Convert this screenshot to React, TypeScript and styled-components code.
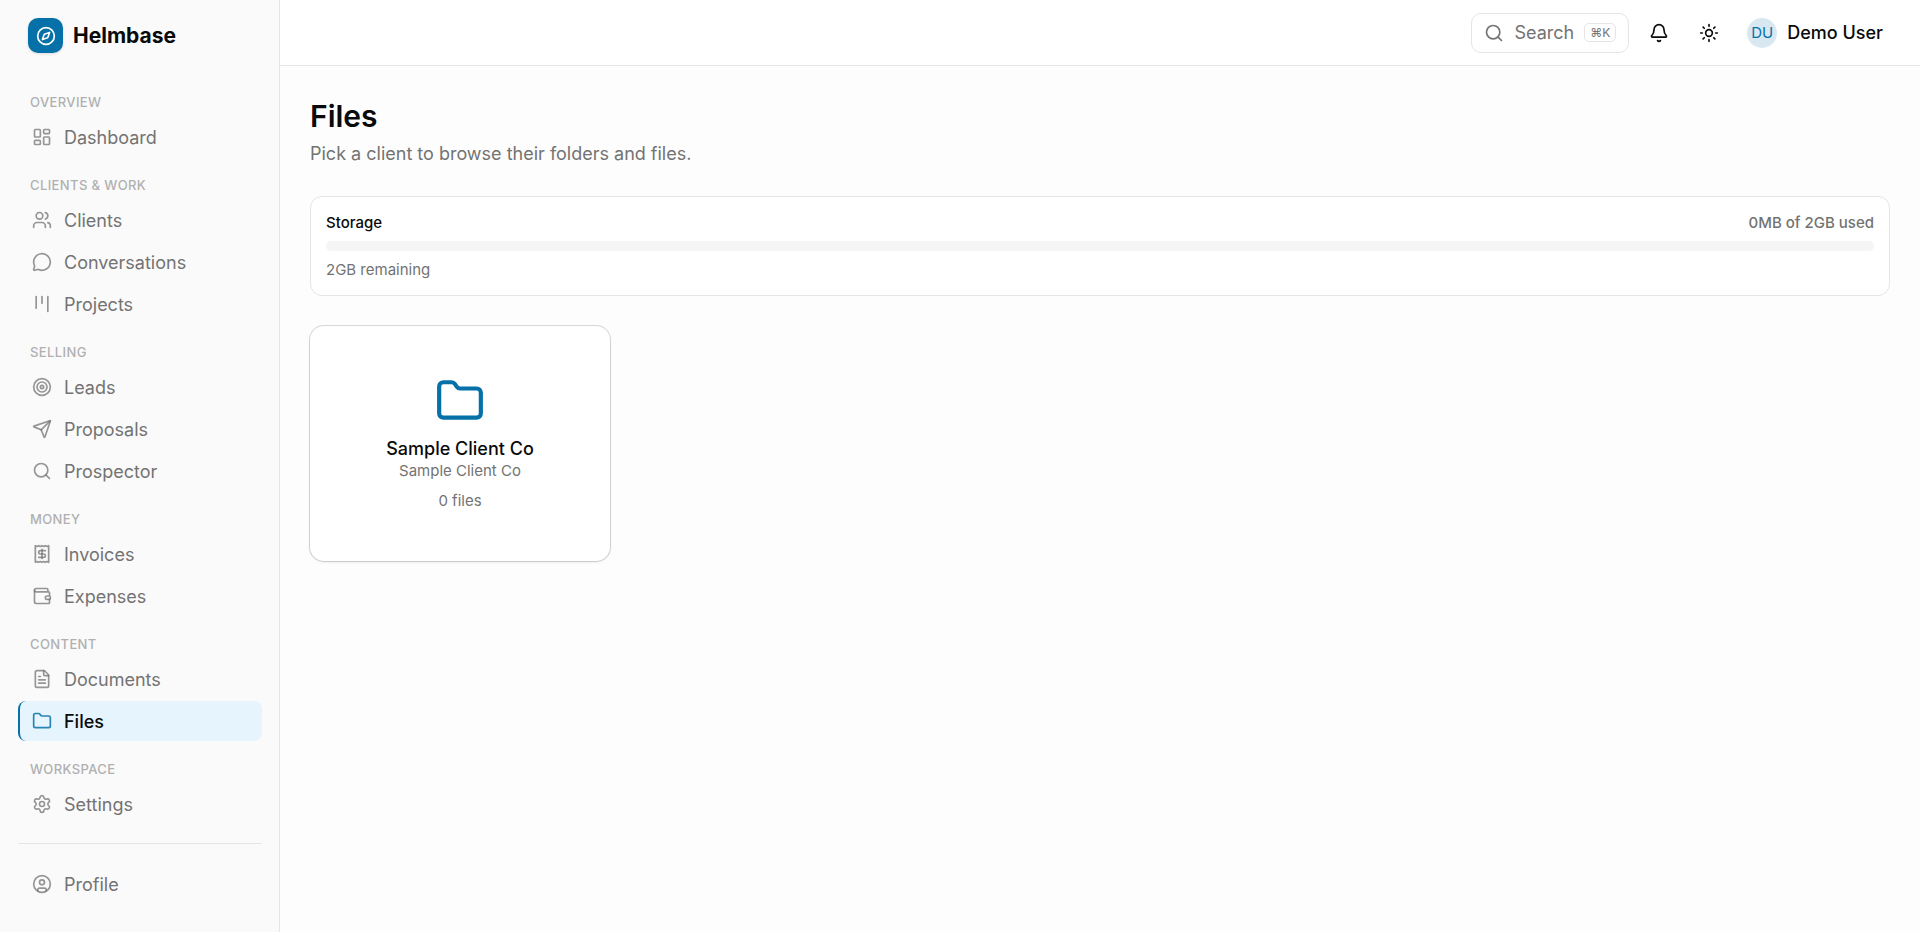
import React from "react";
import styled, { createGlobalStyle } from "styled-components";
import {
  Bell,
  CircleUser,
  Compass,
  FileText,
  Folder,
  Kanban,
  LayoutDashboard,
  MessageCircle,
  Receipt,
  Search,
  Send,
  Settings,
  Sun,
  Target,
  Users,
  Wallet,
  type LucideIcon,
} from "lucide-react";

const color = {
  ink: "#0a0a0a",
  muted: "#737373",
  faint: "#b0b0b0",
  line: "#e5e5e5",
  brand: "#0671a8",
  sidebar: "#fafafa",
  page: "#fdfdfd",
};

const GlobalStyle = createGlobalStyle`
  *, *::before, *::after { box-sizing: border-box; }
  body {
    margin: 0;
    background: ${color.page};
    color: ${color.ink};
    font-family: Inter, "Liberation Sans", sans-serif;
    font-size: 18px;
    line-height: 25px;
    -webkit-font-smoothing: antialiased;
  }
  h1, h2, p { margin: 0; }
  a { color: inherit; text-decoration: none; }
  button { font: inherit; color: inherit; background: none; border: 0; padding: 0; cursor: pointer; }
`;

const Shell = styled.div`
  display: flex;
  min-height: 100vh;
`;

const Sidebar = styled.aside`
  flex: 0 0 280px;
  display: flex;
  flex-direction: column;
  background: ${color.sidebar};
  border-right: 1px solid ${color.line};
`;

const Brand = styled.a`
  display: flex;
  align-items: center;
  gap: 10px;
  padding: 18px 28px 21px;
  font-size: 21px;
  font-weight: 700;
`;

const BrandMark = styled.span`
  display: flex;
  align-items: center;
  justify-content: center;
  width: 35px;
  height: 35px;
  border-radius: 10px;
  background: ${color.brand};
  color: #fff;
  box-shadow: 0 1px 3px rgba(0, 0, 0, 0.12);
`;

const Nav = styled.nav`
  display: flex;
  flex-direction: column;
  padding: 0 17px 0 18px;
`;

const NavGroup = styled.section`
  display: flex;
  flex-direction: column;
  gap: 2px;
  padding-top: 19px;
`;

const GroupLabel = styled.h2`
  padding: 0 12px;
  margin-bottom: 3px;
  color: ${color.faint};
  font-size: 13px;
  font-weight: 500;
  line-height: 19px;
  letter-spacing: 0.03em;
  text-transform: uppercase;
`;

const NavItem = styled.a<{ $active?: boolean }>`
  display: flex;
  align-items: center;
  gap: 12px;
  height: 40px;
  padding: 0 12px;
  border-left: 2px solid ${(p) => (p.$active ? color.brand : "transparent")};
  border-radius: 8px;
  background: ${(p) => (p.$active ? "#e5f4fd" : "transparent")};
  color: ${(p) => (p.$active ? color.ink : color.muted)};
  font-weight: ${(p) => (p.$active ? 500 : 400)};

  svg {
    color: ${(p) => (p.$active ? "rgba(6, 113, 168, 0.85)" : "rgba(115, 115, 115, 0.75)")};
  }
`;

const SidebarFooter = styled.div`
  margin: 19px 17px 0 18px;
  padding-top: 20px;
  border-top: 1px solid ${color.line};
`;

const Column = styled.div`
  flex: 1;
  min-width: 0;
  display: flex;
  flex-direction: column;
`;

const Header = styled.header`
  display: flex;
  align-items: center;
  justify-content: flex-end;
  gap: 10px;
  height: 66px;
  padding: 0 37px 0 20px;
  background: #fff;
  border-bottom: 1px solid ${color.line};
`;

const SearchButton = styled.button`
  display: flex;
  align-items: center;
  gap: 10px;
  height: 40px;
  padding: 0 12px;
  border: 1px solid ${color.line};
  border-radius: 10px;
  color: ${color.muted};
`;

const Shortcut = styled.kbd`
  padding: 0 5px;
  border: 1px solid ${color.line};
  border-radius: 5px;
  font-family: inherit;
  font-size: 12px;
  line-height: 17px;
`;

const IconButton = styled.button`
  display: flex;
  align-items: center;
  justify-content: center;
  width: 40px;
  height: 40px;
`;

const UserButton = styled.button`
  display: flex;
  align-items: center;
  gap: 10px;
  padding-left: 8px;
  font-weight: 500;
`;

const Avatar = styled.span`
  display: flex;
  align-items: center;
  justify-content: center;
  width: 30px;
  height: 30px;
  border-radius: 50%;
  background: #d9e8f0;
  color: ${color.brand};
  font-size: 15px;
  font-weight: 400;
`;

const Main = styled.main`
  display: flex;
  flex-direction: column;
  gap: 30px;
  padding: 30px;
`;

const PageTitle = styled.h1`
  font-size: 30px;
  font-weight: 600;
  line-height: 40px;
`;

const Subtitle = styled.p`
  margin-top: 5px;
  color: ${color.muted};
`;

const StorageCard = styled.section`
  display: flex;
  flex-direction: column;
  gap: 8px;
  padding: 15px;
  border: 1px solid ${color.line};
  border-radius: 12px;
  background: #fff;
  font-size: 15px;
  line-height: 21px;
`;

const StorageRow = styled.div`
  display: flex;
  justify-content: space-between;
  font-weight: 500;
`;

const Muted = styled.span`
  color: ${color.muted};
`;

const Meter = styled.div`
  height: 10px;
  border-radius: 5px;
  background: #f5f5f5;
`;

const ClientGrid = styled.div`
  display: grid;
  grid-template-columns: repeat(auto-fill, minmax(280px, 1fr));
  gap: 20px;
`;

const ClientCard = styled.a`
  display: flex;
  flex-direction: column;
  align-items: center;
  padding: 50px 20px;
  border-radius: 14px;
  background: #fff;
  box-shadow: 0 0 0 1px rgba(10, 10, 10, 0.14), 0 1px 3px rgba(0, 0, 0, 0.1);
  font-weight: 500;

  svg {
    margin-bottom: 10px;
    color: ${color.brand};
  }
`;

const ClientMeta = styled.span`
  color: ${color.muted};
  font-size: 15px;
  font-weight: 400;
  line-height: 20px;
`;

const FileCount = styled(ClientMeta)`
  margin-top: 10px;
`;

type Item = { label: string; icon: LucideIcon; active?: boolean };

const groups: { label: string; items: Item[] }[] = [
  { label: "Overview", items: [{ label: "Dashboard", icon: LayoutDashboard }] },
  {
    label: "Clients & Work",
    items: [
      { label: "Clients", icon: Users },
      { label: "Conversations", icon: MessageCircle },
      { label: "Projects", icon: Kanban },
    ],
  },
  {
    label: "Selling",
    items: [
      { label: "Leads", icon: Target },
      { label: "Proposals", icon: Send },
      { label: "Prospector", icon: Search },
    ],
  },
  {
    label: "Money",
    items: [
      { label: "Invoices", icon: Receipt },
      { label: "Expenses", icon: Wallet },
    ],
  },
  {
    label: "Content",
    items: [
      { label: "Documents", icon: FileText },
      { label: "Files", icon: Folder, active: true },
    ],
  },
  { label: "Workspace", items: [{ label: "Settings", icon: Settings }] },
];

function NavLink({ label, icon: Icon, active }: Item) {
  return (
    <NavItem href="#" $active={active} aria-current={active ? "page" : undefined}>
      <Icon size={20} />
      {label}
    </NavItem>
  );
}

export default function App() {
  return (
    <>
      <GlobalStyle />
      <Shell>
        <Sidebar>
          <Brand href="#">
            <BrandMark>
              <Compass size={20} />
            </BrandMark>
            Helmbase
          </Brand>
          <Nav aria-label="Main">
            {groups.map((group) => (
              <NavGroup key={group.label}>
                <GroupLabel>{group.label}</GroupLabel>
                {group.items.map((item) => (
                  <NavLink key={item.label} {...item} />
                ))}
              </NavGroup>
            ))}
          </Nav>
          <SidebarFooter>
            <NavLink label="Profile" icon={CircleUser} />
          </SidebarFooter>
        </Sidebar>
        <Column>
          <Header>
            <SearchButton type="button">
              <Search size={20} />
              Search
              <Shortcut>⌘K</Shortcut>
            </SearchButton>
            <IconButton type="button" aria-label="Notifications">
              <Bell size={20} />
            </IconButton>
            <IconButton type="button" aria-label="Toggle theme">
              <Sun size={20} />
            </IconButton>
            <UserButton type="button">
              <Avatar>DU</Avatar>
              Demo User
            </UserButton>
          </Header>
          <Main>
            <div>
              <PageTitle>Files</PageTitle>
              <Subtitle>Pick a client to browse their folders and files.</Subtitle>
            </div>
            <StorageCard>
              <StorageRow>
                <span>Storage</span>
                <Muted>0MB of 2GB used</Muted>
              </StorageRow>
              <Meter role="progressbar" aria-label="Storage used" aria-valuenow={0} />
              <Muted>2GB remaining</Muted>
            </StorageCard>
            <ClientGrid>
              <ClientCard href="#">
                <Folder size={50} />
                Sample Client Co
                <ClientMeta>Sample Client Co</ClientMeta>
                <FileCount>0 files</FileCount>
              </ClientCard>
            </ClientGrid>
          </Main>
        </Column>
      </Shell>
    </>
  );
}
